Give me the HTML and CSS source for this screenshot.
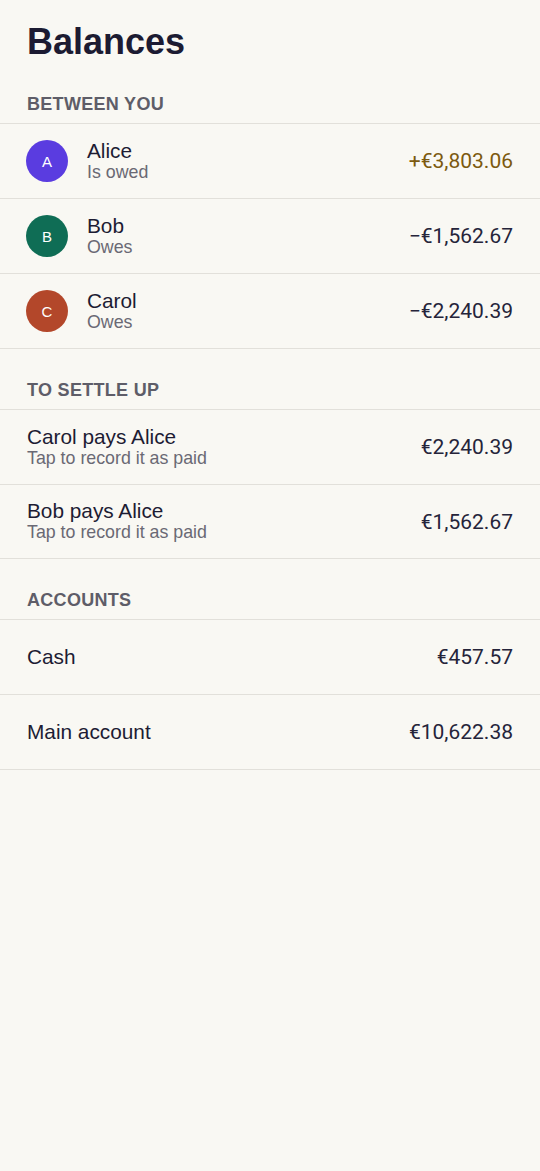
FILE: index.html
```html
<!DOCTYPE html>
<html lang="en">
<head>
<meta charset="utf-8">
<title>Balances</title>
<link rel="stylesheet" href="styles.css">
</head>
<body>
<main class="page">
  <h1 class="title">Balances</h1>

  <section class="section">
    <h2 class="section-label">BETWEEN YOU</h2>
    <ul class="list">
      <li class="row">
        <span class="avatar avatar-a">A</span>
        <div class="text">
          <span class="primary">Alice</span>
          <span class="secondary">Is owed</span>
        </div>
        <span class="amount positive">+€3,803.06</span>
      </li>
      <li class="row">
        <span class="avatar avatar-b">B</span>
        <div class="text">
          <span class="primary">Bob</span>
          <span class="secondary">Owes</span>
        </div>
        <span class="amount">−€1,562.67</span>
      </li>
      <li class="row">
        <span class="avatar avatar-c">C</span>
        <div class="text">
          <span class="primary">Carol</span>
          <span class="secondary">Owes</span>
        </div>
        <span class="amount">−€2,240.39</span>
      </li>
    </ul>
  </section>

  <section class="section">
    <h2 class="section-label">TO SETTLE UP</h2>
    <ul class="list">
      <li class="row row-tight">
        <div class="text">
          <span class="primary">Carol pays Alice</span>
          <span class="secondary">Tap to record it as paid</span>
        </div>
        <span class="amount">€2,240.39</span>
      </li>
      <li class="row row-tight">
        <div class="text">
          <span class="primary">Bob pays Alice</span>
          <span class="secondary">Tap to record it as paid</span>
        </div>
        <span class="amount">€1,562.67</span>
      </li>
    </ul>
  </section>

  <section class="section">
    <h2 class="section-label">ACCOUNTS</h2>
    <ul class="list">
      <li class="row">
        <div class="text">
          <span class="primary">Cash</span>
        </div>
        <span class="amount">€457.57</span>
      </li>
      <li class="row">
        <div class="text">
          <span class="primary">Main account</span>
        </div>
        <span class="amount">€10,622.38</span>
      </li>
    </ul>
  </section>
</main>
</body>
</html>
```

FILE: styles.css
```css
* {
  box-sizing: border-box;
}

html, body {
  margin: 0;
  padding: 0;
  background: #f9f8f3;
}

body {
  font-family: "Liberation Sans", Arial, sans-serif;
  color: #1d1c33;
  min-height: 1171px;
}

.page {
  display: flex;
  flex-direction: column;
}

.title {
  margin: 0;
  padding: 21px 27px 0;
  font-size: 36px;
  line-height: 42px;
  font-weight: 700;
  color: #1c1b32;
}

.section {
  display: flex;
  flex-direction: column;
}

.section-label {
  margin: 0;
  padding: 30px 27px 8px;
  font-size: 18px;
  line-height: 22px;
  font-weight: 700;
  color: #5e5d68;
  letter-spacing: 0.3px;
}

.list {
  list-style: none;
  margin: 0;
  padding: 0;
  border-top: 1px solid #e2e0da;
}

.row {
  display: flex;
  align-items: center;
  gap: 18px;
  height: 75px;
  padding: 0 27px;
  border-bottom: 1px solid #e2e0da;
}

.row-tight:last-child {
  height: 74px;
}

.avatar {
  flex: none;
  width: 42px;
  height: 42px;
  margin-left: -1px;
  border-radius: 50%;
  display: flex;
  align-items: center;
  justify-content: center;
  color: #ffffff;
  font-size: 15px;
  font-weight: 400;
}

.avatar-a { background: #5a3ce0; }
.avatar-b { background: #0f6d55; }
.avatar-c { background: #b3472a; }

.text {
  flex: 1;
  display: flex;
  flex-direction: column;
}

.avatar + .text {
  margin-left: 1px;
}

.primary {
  font-size: 20.8px;
  line-height: 22px;
  color: #1d1c33;
}

.secondary {
  font-size: 17.8px;
  line-height: 21px;
  color: #6a6974;
}

.amount {
  flex: none;
  font-family: Roboto, "Liberation Sans", sans-serif;
  font-size: 21px;
  color: #25243a;
  font-variant-numeric: tabular-nums;
}

.amount.positive {
  color: #7c5a0f;
}
```
